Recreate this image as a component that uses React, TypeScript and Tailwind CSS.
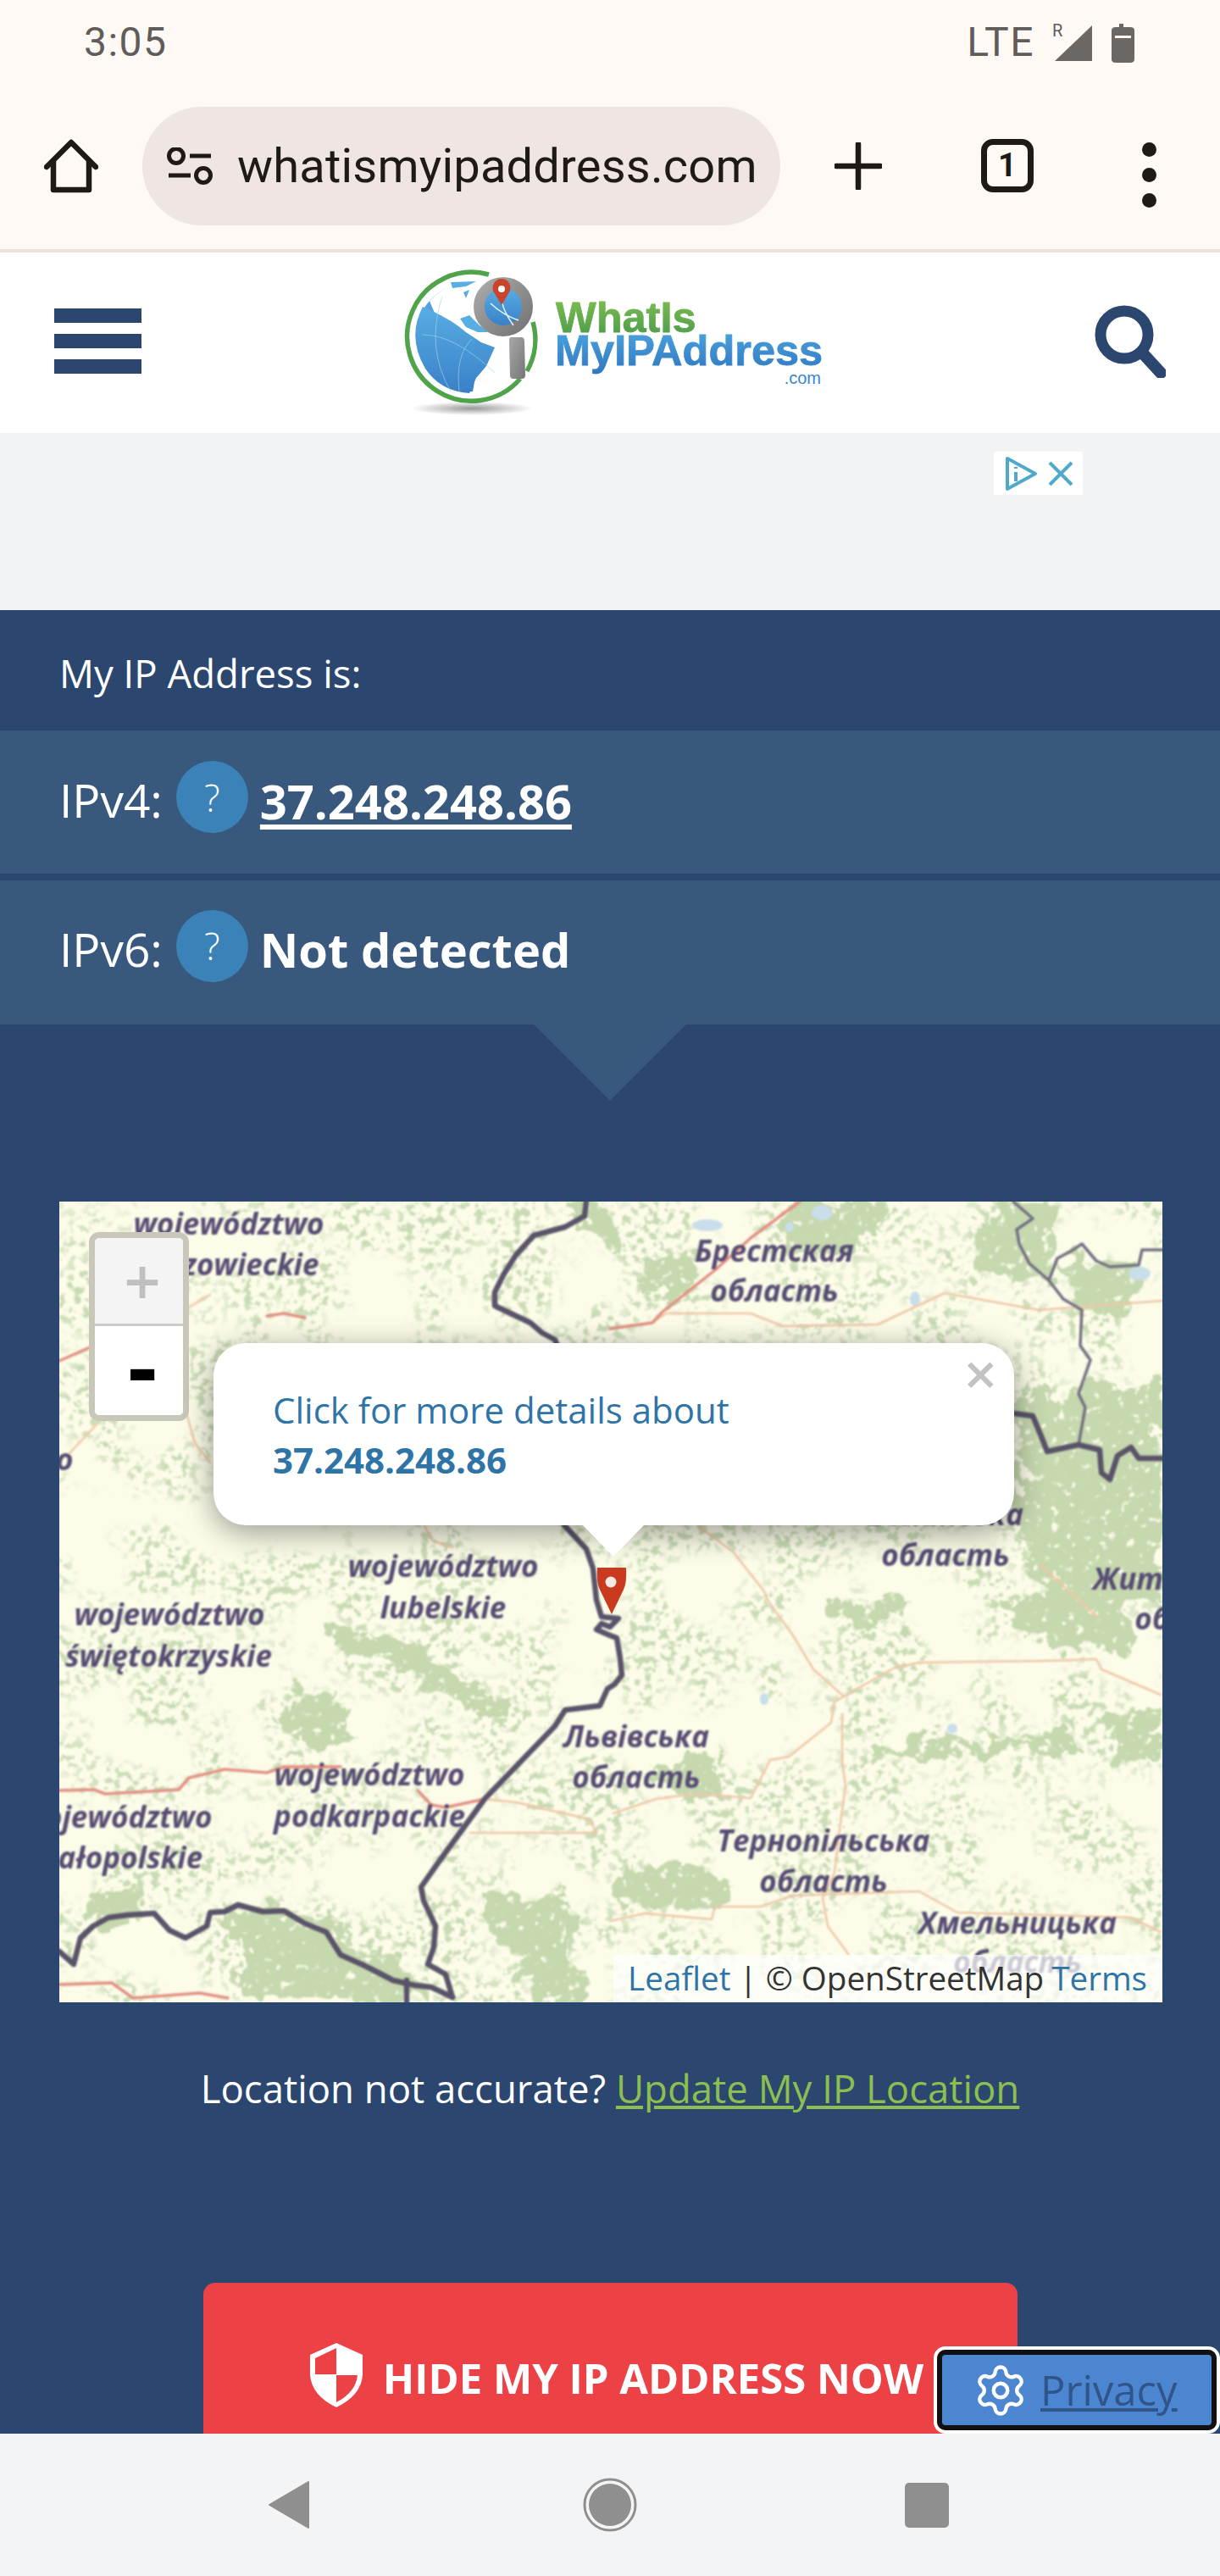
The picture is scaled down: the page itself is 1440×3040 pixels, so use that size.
import { Settings } from 'lucide-react';

const THICK_BORDERS = [
  'M622 0 L620 17 L597 30 L560 40 L539 63 L525 85 L514 107 L514 123 L556 143 L570 155 L585 163 L600 200',
  'M592 375 L597 383 L622 410 L630 433 L634 470 L640 490 L660 492 L650 502 L640 498 L634 505 L650 512 L658 515 L662 539 L664 559 L655 570 L647 575 L638 595 L597 600 L585 619 L502 705 L448 779 L427 809 L430 825 L444 855 L442 880 L435 900 L456 912 L464 939',
  'M0 885 L17 900 L25 869 L40 855 L58 845 L80 842 L112 840 L130 860 L149 869 L174 855 L178 839 L195 838 L211 830 L240 838 L265 837 L290 852 L315 862 L332 889 L361 902 L394 919 L420 925 L439 927 L464 939',
  'M410 919 L410 945',
  'M1127 250 L1149 253 L1159 277 L1166 295 L1203 287 L1228 293 L1230 320 L1240 328 L1249 300 L1265 290 L1274 303 L1302 303',
];

const THIN_BORDERS = [
  'M1126 0 L1149 20 L1130 33 L1133 50 L1145 73 L1168 93 L1178 67 L1195 58 L1207 50 L1224 70 L1240 77 L1274 75 L1278 57 L1302 57',
  'M1168 93 L1185 115 L1207 128 L1205 170 L1217 187 L1203 227 L1211 243 L1203 287',
];

const RED_LINES = [
  'M874 0 L816 43 L775 80 L712 130 L700 143 L650 150',
  'M0 188 L41 170',
  'M245 135 L265 132 L290 137',
  'M0 695 L41 694 L54 699 L141 694 L153 680 L195 670 L245 674 L265 667 L332 667',
  'M423 695 L439 712 L456 715 L502 705',
  'M0 924 L62 922 L87 940 L166 934 L199 940',
];

const ORANGE_LINES = [
  'M700 143 L716 132 L816 132 L854 147 L966 145 L1045 108 L1157 128 L1302 117',
  'M149 127 L178 110',
  'M151 253 L160 285 L178 308',
  'M44 263 L12 297',
  'M431 383 L440 400 L464 408',
  'M502 705 L539 709 L626 729 L634 745 L485 745',
  'M754 383 L795 413 L832 460 L837 472 L866 512 L890 552 L926 584 L986 550 L1015 544 L1164 542 L1224 540 L1230 552 L1300 582',
  'M926 584 L915 590 L911 615 L861 655 L839 659 L816 704 L750 699 L704 705 L654 722',
  'M924 605 L924 662 L928 689 L920 749 L915 792 L901 822 L907 855 L932 889',
  'M650 849 L691 840 L770 847 L774 832 L828 832 L866 819 L982 815 L1015 814 L1060 839 L1264 845 L1300 862',
  'M1157 428 L1225 490',
];

const FOREST_PATCHES = [
  'M1130 230 L1302 210 L1302 470 L1170 480 L1135 420 Z',
  'M1100 0 L1180 0 L1170 100 L1090 80 Z',
  'M1185 65 L1280 85 L1270 125 L1205 140 Z',
  'M850 0 L975 0 L950 60 L860 50 Z',
  'M600 0 L650 0 L665 60 L615 40 Z',
  'M680 70 L750 60 L750 110 L695 110 Z',
  'M320 505 L395 505 L530 590 L530 625 L425 565 L325 525 Z',
  'M265 580 L320 570 L355 640 L280 645 Z',
  'M190 830 L300 840 L430 915 L440 945 L230 945 Z',
  'M30 815 L100 820 L95 845 L30 850 Z',
  'M1120 472 L1262 472 L1270 530 L1190 530 L1125 505 Z',
  'M910 472 L1010 472 L1000 498 L915 495 Z',
  'M945 636 L1195 630 L1195 652 L965 650 Z',
  'M1240 600 L1302 595 L1302 655 L1250 655 Z',
  'M660 775 L780 790 L780 835 L660 835 Z',
  'M700 665 L770 650 L770 710 L710 695 Z',
  'M490 810 L600 820 L620 945 L560 945 Z',
];

const LAKES = [
  { cx: 900, cy: 13, rx: 12, ry: 9 },
  { cx: 862, cy: 30, rx: 5, ry: 6 },
  { cx: 765, cy: 28, rx: 18, ry: 7 },
  { cx: 1275, cy: 85, rx: 13, ry: 8 },
  { cx: 1010, cy: 115, rx: 6, ry: 9 },
  { cx: 1054, cy: 622, rx: 6, ry: 6 },
  { cx: 832, cy: 587, rx: 5, ry: 7 },
];

const MAP_LABELS = [
  { text: 'województwo', x: 200, y: 39 },
  { text: 'mazowieckie', x: 200, y: 87 },
  { text: 'województwo', x: 453, y: 443 },
  { text: 'lubelskie', x: 453, y: 492 },
  { text: 'województwo', x: 130, y: 500 },
  { text: 'świętokrzyskie', x: 129, y: 549 },
  { text: 'województwo', x: 366, y: 689 },
  { text: 'podkarpackie', x: 366, y: 738 },
  { text: 'województwo', x: 68, y: 739 },
  { text: 'małopolskie', x: 68, y: 787 },
  { text: 'województwo', x: -96, y: 317 },
  { text: 'Брестская', x: 844, y: 71 },
  { text: 'область', x: 844, y: 118 },
  { text: 'Волинська', x: 1046, y: 382 },
  { text: 'область', x: 1046, y: 430 },
  { text: 'Житомирська', x: 1345, y: 458 },
  { text: 'область', x: 1345, y: 505 },
  { text: 'Львівська', x: 681, y: 644 },
  { text: 'область', x: 681, y: 692 },
  { text: 'Тернопільська', x: 902, y: 767 },
  { text: 'область', x: 902, y: 815 },
  { text: 'Хмельницька', x: 1131, y: 864 },
  { text: 'область', x: 1131, y: 910 },
];

const MapTiles = () => (
  <svg viewBox="0 0 1302 945" className="block h-[945px] w-[1302px]">
    <defs>
      <filter id="speckle" x="0" y="0" width="100%" height="100%" colorInterpolationFilters="sRGB">
        <feTurbulence type="fractalNoise" baseFrequency="0.012" numOctaves="3" seed="23" />
        <feColorMatrix values="0 0 0 0 1  0 0 0 0 1  0 0 0 0 1  5 0 0 0 -2" result="clusters" />
        <feTurbulence type="fractalNoise" baseFrequency="0.11" numOctaves="3" seed="11" />
        <feColorMatrix values="0 0 0 0 0.79  0 0 0 0 0.86  0 0 0 0 0.71  10 0 0 0 -5.2" />
        <feComposite in2="clusters" operator="in" />
        <feGaussianBlur stdDeviation="1" />
      </filter>
      <filter id="patch" x="-10%" y="-10%" width="120%" height="120%" colorInterpolationFilters="sRGB">
        <feTurbulence type="fractalNoise" baseFrequency="0.03" numOctaves="4" seed="4" result="noise" />
        <feDisplacementMap in="SourceGraphic" in2="noise" scale="60" xChannelSelector="R" yChannelSelector="G" result="moved" />
        <feTurbulence type="fractalNoise" baseFrequency="0.1" numOctaves="3" seed="9" />
        <feColorMatrix values="0 0 0 0 1  0 0 0 0 1  0 0 0 0 1  10 0 0 0 -2.6" result="holes" />
        <feComposite in="moved" in2="holes" operator="in" />
        <feGaussianBlur stdDeviation="1.1" />
      </filter>
      <filter id="soft" x="-5%" y="-5%" width="110%" height="110%">
        <feGaussianBlur stdDeviation="0.9" />
      </filter>
    </defs>
    <rect width="1302" height="945" fill="#fcfce9" />
    <rect width="1302" height="945" filter="url(#speckle)" />
    <g filter="url(#patch)" fill="#c5d8ae">
      {FOREST_PATCHES.map((d) => (
        <path key={d} d={d} />
      ))}
    </g>
    <g filter="url(#soft)">
      {LAKES.map((lake) => (
        <ellipse key={lake.cx} {...lake} fill="#c9deea" />
      ))}
      <g fill="none" strokeLinejoin="round" strokeLinecap="round">
        {ORANGE_LINES.map((d) => (
          <path key={d} d={d} stroke="#efc7a8" strokeWidth="2.5" />
        ))}
        {RED_LINES.map((d) => (
          <path key={d} d={d} stroke="#e29083" strokeWidth="3.5" />
        ))}
        {THIN_BORDERS.map((d) => (
          <path key={d} d={d} stroke="#736f82" strokeWidth="3.5" />
        ))}
        {THICK_BORDERS.map((d) => (
          <path key={d} d={d} stroke="#5a5369" strokeWidth="6.5" />
        ))}
      </g>
      <g className="fill-[#574b72] font-['Open_Sans',sans-serif] text-[35px] font-bold italic" textAnchor="middle">
        {MAP_LABELS.map((label) => (
          <text key={label.text + label.y} x={label.x} y={label.y}>
            {label.text}
          </text>
        ))}
      </g>
    </g>
    {/* marker */}
    <path d="M635 432 L669 432 Q670 450 666 458 L652 487 L638 458 Q634 450 635 432 Z" fill="#c93a1e" />
    <circle cx="651" cy="449" r="6.5" fill="#f4ece4" />
  </svg>
);

const Logo = () => (
  <svg viewBox="470 310 510 185" className="h-[185px] w-[510px]">
    <defs>
      <linearGradient id="logoGreen" x1="0" y1="0" x2="0" y2="1">
        <stop offset="0" stopColor="#86bf52" />
        <stop offset="1" stopColor="#45994a" />
      </linearGradient>
      <linearGradient id="logoBlue" x1="0" y1="0" x2="0" y2="1">
        <stop offset="0" stopColor="#4da6e0" />
        <stop offset="1" stopColor="#2f77c0" />
      </linearGradient>
      <linearGradient id="globeBlue" x1="0" y1="0" x2="0" y2="1">
        <stop offset="0" stopColor="#58ade3" />
        <stop offset="1" stopColor="#3a80c8" />
      </linearGradient>
      <linearGradient id="logoGray" x1="0" y1="0" x2="1" y2="1">
        <stop offset="0" stopColor="#a8a8a8" />
        <stop offset="1" stopColor="#767676" />
      </linearGradient>
      <radialGradient id="logoShadow">
        <stop offset="0" stopColor="#9a9a9a" />
        <stop offset="1" stopColor="#ffffff" />
      </radialGradient>
    </defs>
    <ellipse cx="555" cy="482" rx="72" ry="8" fill="url(#logoShadow)" />
    <circle cx="555" cy="397" r="76" fill="#fff" />
    <path d="M575 324 A76 76 0 1 0 612 447" fill="none" stroke="#4ea34b" strokeWidth="5.5" />
    <path d="M627 380 A76 76 0 0 1 620 438" fill="none" stroke="#4ea34b" strokeWidth="5.5" />
    <path
      d="M550 331 Q520 338 505 355 L512 372 L530 382 L548 400 L562 428 L556 462 Q525 465 505 440 Q482 405 495 370 Q510 340 550 331 Z"
      fill="url(#globeBlue)"
    />
    <path
      d="M497 362 Q530 376 548 392 L566 404 L582 410 L572 432 L560 446 L552 464 Q518 462 500 435 Q478 398 497 362 Z"
      fill="url(#globeBlue)"
    />
    <path d="M541 376 L552 372 L564 384 L574 392 L562 392 L548 386 Z" fill="#58ade3" />
    <path d="M530 333 L560 332 L548 338 L532 340 Z" fill="#58ade3" />
    <path d="M545 345 L552 342 L548 352 Z" fill="#58ade3" />
    <g fill="none" stroke="#a7d3f0" strokeWidth="0.8" opacity="0.8">
      <path d="M497 395 Q535 395 582 440" />
      <path d="M520 350 Q500 410 530 462" />
      <path d="M555 400 Q535 420 540 462" />
    </g>
    <circle cx="592" cy="362" r="28" fill="none" stroke="url(#logoGray)" strokeWidth="14" />
    <circle cx="592" cy="362" r="22" fill="url(#globeBlue)" />
    <path d="M577 358 Q592 372 610 378 M588 345 Q590 365 604 384" fill="none" stroke="#e8f4fb" strokeWidth="1.5" />
    <path d="M590 360 L581 345 A10.5 10.5 0 1 1 599 345 Z" fill="#c8452c" />
    <circle cx="590" cy="341" r="4" fill="#fff" />
    <path d="M601 398 L613 398 Q617 398 617 403 L618 443 Q618 447 614 447 L604 447 Q600 447 600 443 L599 402 Q599 398 601 398 Z" fill="url(#logoGray)" />
    <g className="font-['Liberation_Sans',sans-serif] font-bold">
      <text x="654" y="392" fontSize="50.5" fill="url(#logoGreen)" stroke="url(#logoGreen)" strokeWidth="0.8">
        WhatIs
      </text>
      <text x="653" y="431" fontSize="50.5" fill="url(#logoBlue)" stroke="url(#logoBlue)" strokeWidth="0.8">
        MyIPAddress
      </text>
    </g>
    <text x="967" y="453" textAnchor="end" fontSize="20" fill="#3a86cc" className="font-['Liberation_Sans',sans-serif]">
      .com
    </text>
  </svg>
);

const HelpBadge = () => (
  <span className="ml-[2px] flex h-[85px] w-[85px] -translate-y-[4px] items-center justify-center rounded-full bg-[#3a82b8] text-[44px] font-light text-white">
    ?
  </span>
);

const App = () => {
  return (
    <div className="flex h-[3040px] w-[1440px] flex-col overflow-hidden bg-white font-['Open_Sans',sans-serif]">
      {/* status bar + browser toolbar */}
      <div className="h-[298px] shrink-0 border-b-4 border-[#f0e2db] bg-[#fff9f6]">
        <div className="flex h-[100px] items-center justify-between pr-[98px] pl-[99px] font-['Roboto',sans-serif] text-[#5f5c5a]">
          <span className="text-[48px] leading-none tracking-[1.5px]">3:05</span>
          <div className="flex items-center">
            <span className="text-[48px] leading-none tracking-[1.5px]">LTE</span>
            <svg viewBox="0 0 100 48" className="ml-[21px] h-[48px] w-[100px]">
              <text x="0" y="17" fontSize="20" fill="#5f5c5a" className="font-['Roboto',sans-serif]">R</text>
              <path d="M3 46 L47 4 L47 46 Z" fill="#6b6765" />
              <path d="M79 2 L84 2 L84 6 L92 6 Q97 6 97 10 L97 44 Q97 48 92 48 L75 48 Q70 48 70 44 L70 10 Q70 6 75 6 L79 6 Z M74 16 L74 19 L93 19 L93 16 Z" fill="#6b6765" fillRule="evenodd" />
            </svg>
          </div>
        </div>
        <div className="flex items-start pt-[26px]">
          <svg viewBox="0 0 64 64" fill="none" className="mt-[38px] ml-[52px] h-[64px] w-[64px]" stroke="#1d1a17" strokeWidth="6.5" strokeLinecap="round" strokeLinejoin="round">
            <path d="M3 33 L32 4 L61 33" />
            <path d="M11 27 L11 60 L53 60 L53 27" />
          </svg>
          <div className="ml-[52px] flex h-[140px] w-[753px] items-center rounded-full bg-[#efe5e2] pl-[29px]">
            <svg viewBox="0 0 54 44" fill="none" stroke="#1d1a17" strokeWidth="5" className="h-[44px] w-[54px]">
              <circle cx="11" cy="10" r="8.5" />
              <path d="M27 10 L52 10" />
              <path d="M2 33 L28 33" />
              <circle cx="43" cy="33" r="8.5" />
            </svg>
            <span className="ml-[29px] font-['Roboto',sans-serif] text-[56px] leading-none tracking-[0.2px] text-[#1d1a17]">
              whatismyipaddress.com
            </span>
          </div>
          <svg viewBox="0 0 56 56" className="mt-[42px] ml-[64px] h-[56px] w-[56px]" stroke="#1d1a17" strokeWidth="6.5" strokeLinecap="round">
            <path d="M28 2 L28 54 M2 28 L54 28" />
          </svg>
          <div className="mt-[38px] ml-[117px] flex h-[63px] w-[62px] items-center justify-center rounded-[14px] border-[7px] border-[#1d1a17] font-['Roboto',sans-serif] text-[38px] font-bold text-[#1d1a17]">
            1
          </div>
          <div className="mt-[42px] ml-[128px] flex flex-col gap-[13px]">
            <span className="h-[17px] w-[17px] rounded-full bg-[#1d1a17]" />
            <span className="h-[17px] w-[17px] rounded-full bg-[#1d1a17]" />
            <span className="h-[17px] w-[17px] rounded-full bg-[#1d1a17]" />
          </div>
        </div>
      </div>

      {/* page content, cut off by the nav bar */}
      <div className="relative flex-1 overflow-hidden bg-[#2b4770]">
        <header className="flex h-[213px] items-center justify-between bg-white pr-[64px] pb-[4px] pl-[64px]">
          <div className="flex w-[103px] flex-col gap-[13px]">
            <span className="h-[17px] bg-[#2b4770]" />
            <span className="h-[17px] bg-[#2b4770]" />
            <span className="h-[17px] bg-[#2b4770]" />
          </div>
          <div className="-ml-[5px]">
            <Logo />
          </div>
          <svg viewBox="0 0 84 86" fill="none" stroke="#2b4770" className="h-[86px] w-[84px]">
            <circle cx="35" cy="35" r="28" strokeWidth="13" />
            <path d="M56 56 L78 80" strokeWidth="14" strokeLinecap="round" />
          </svg>
        </header>

        <div className="flex h-[209px] items-start justify-end bg-[#f2f3f5] pt-[22px] pr-[162px]">
          <div className="flex h-[51px] w-[105px] items-center justify-center gap-[10px] bg-white">
            <svg viewBox="0 0 42 42" fill="none" stroke="#4fa9cb" strokeWidth="4" className="h-[42px] w-[42px]">
              <path d="M5 3 L38 21 L5 39 Z" strokeLinejoin="round" />
              <path d="M15 19 L15 30 M15 13 L15 15" />
            </svg>
            <svg viewBox="0 0 32 32" stroke="#4fa9cb" strokeWidth="4" className="h-[32px] w-[32px]">
              <path d="M3 3 L29 29 M29 3 L3 29" />
            </svg>
          </div>
        </div>

        <div className="flex h-[142px] items-center pt-[6px] pl-[70px] text-[45.5px] text-white">My IP Address is:</div>

        <div className="flex h-[169px] items-center gap-[14px] bg-[#38587e] pb-[4px] pl-[70px] text-[55px] text-white">
          <span>IPv4:</span>
          <HelpBadge />
          <a className="text-[56px] font-bold underline decoration-[6px] underline-offset-[6px]">37.248.248.86</a>
        </div>
        <div className="mt-[8px] flex h-[170px] items-center gap-[14px] bg-[#38587e] pb-[8px] pl-[70px] text-[55px] text-white">
          <span>IPv6:</span>
          <HelpBadge />
          <span className="text-[56px] font-bold">Not detected</span>
        </div>
        <div className="mx-auto h-0 w-0 border-t-[90px] border-r-[90px] border-l-[90px] border-t-[#38587e] border-r-transparent border-l-transparent" />

        <div className="relative mt-[119px] ml-[70px] h-[945px] w-[1302px] overflow-hidden">
          <MapTiles />

          {/* leaflet zoom control */}
          <div className="absolute top-[36px] left-[35px] flex h-[223px] w-[118px] flex-col overflow-hidden rounded-[12px] border-[7px] border-[#c8c7b9]">
            <div className="flex h-[104px] items-center justify-center border-b-[3px] border-[#cccccc] bg-[#f4f4f4] pl-[8px] font-['DejaVu_Sans',sans-serif] text-[58px] leading-none font-bold text-[#bfbfbf]">
              +
            </div>
            <div className="flex flex-1 items-center justify-center bg-white pl-[8px] font-['DejaVu_Sans',sans-serif] text-[92px] leading-none font-bold text-black">
              -
            </div>
          </div>

          {/* popup */}
          <div className="absolute top-[167px] left-[182px] h-[215px] w-[945px] rounded-[38px] bg-white pt-[49px] pl-[70px] text-[#2f74a6] shadow-[0_8px_37px_rgba(0,0,0,0.4)]">
            <p className="text-[42px] leading-[59px]">Click for more details about</p>
            <p className="text-[42px] leading-[59px] font-bold">37.248.248.86</p>
            <span className="absolute top-[10px] right-[18px] font-['DejaVu_Sans',sans-serif] text-[52px] leading-none font-bold text-[#c3c3c3]">
              ×
            </span>
          </div>
          <div className="absolute top-[382px] left-[618px] h-0 w-0 border-t-[37px] border-r-[36px] border-l-[36px] border-t-white border-r-transparent border-l-transparent" />

          {/* attribution */}
          <div className="absolute right-0 bottom-0 flex h-[56px] w-[648px] items-center justify-end bg-white/70 pr-[18px] text-[38.6px] whitespace-nowrap text-[#333333]">
            <a className="text-[#2f74a6]">Leaflet</a>
            <span className="mx-[10px]">|</span>
            <span>© OpenStreetMap</span>
            <a className="ml-[9px] text-[#2f74a6]">Terms</a>
          </div>
        </div>

        <p className="mt-[73px] text-center text-[45.5px] leading-[57px] text-white">
          Location not accurate? <a className="text-[#8cbf4f] underline">Update My IP Location</a>
        </p>

        <button className="mx-auto mt-[201px] flex h-[300px] w-[961px] items-start justify-center gap-[24px] rounded-t-[14px] bg-[#ec4245] pt-[71px] pl-[16px] text-[49px] font-bold text-white">
          <svg viewBox="0 0 62 76" className="h-[76px] w-[62px]">
            <path d="M31 0 L62 14 L62 38 Q60 62 31 76 Q2 62 0 38 L0 14 Z" fill="#fff" />
            <path d="M31 6 L31 37 L6 37 L6 18 Z M31 38 L56 38 Q54 58 31 70 Z" fill="#ec4245" />
          </svg>
          <span className="leading-[82px]">HIDE MY IP ADDRESS NOW</span>
        </button>

        {/* cookie settings button */}
        <div className="absolute right-0 bottom-0 rounded-[14px] border-[4px] border-white">
          <a className="flex h-[95px] w-[330px] items-center gap-[14px] rounded-[10px] border-[6px] border-[#111111] bg-[#4c85d0] pl-[36px] text-[49px] text-[#2f5589] underline">
            <Settings size={66} strokeWidth={1.6} className="shrink-0 text-white" />
            Privacy
          </a>
        </div>
      </div>

      {/* android nav bar */}
      <nav className="flex h-[168px] shrink-0 items-center justify-center gap-[322px] bg-[#f3f4f6] pr-[4px]">
        <svg viewBox="0 0 50 56" className="h-[56px] w-[50px]">
          <path d="M48 1 L48 55 L2 28 Z" fill="#8f8f8f" stroke="#8f8f8f" strokeWidth="2" strokeLinejoin="round" />
        </svg>
        <svg viewBox="0 0 64 64" className="h-[64px] w-[64px]">
          <circle cx="32" cy="32" r="30" fill="none" stroke="#8f8f8f" strokeWidth="3" />
          <circle cx="32" cy="32" r="25" fill="#8f8f8f" />
        </svg>
        <span className="-ml-[6px] h-[53px] w-[52px] rounded-[5px] bg-[#8f8f8f]" />
      </nav>
    </div>
  );
};

export default App;
